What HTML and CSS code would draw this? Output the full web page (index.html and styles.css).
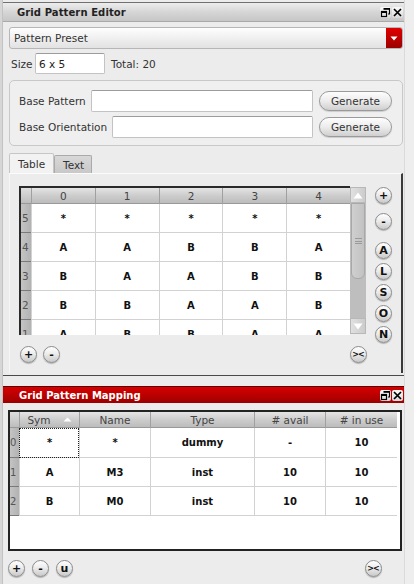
FILE: index.html
```html
<!DOCTYPE html>
<html>
<head>
<meta charset="utf-8">
<title>Grid Pattern Editor</title>
<link rel="stylesheet" href="styles.css">
</head>
<body>
<div class="screen">
  <div class="edge-left"></div>
  <div class="main">
    <section class="panel editor">
      <header class="titlebar">
        <span class="title">Grid Pattern Editor</span>
        <span class="win-icons">
          <span class="win-btn"><svg width="11" height="11" viewBox="0 0 11 11"><path d="M4 1.5h5.5v5.5H8" fill="none" stroke="#000" stroke-width="1.2"/><rect x="1.5" y="4.5" width="5" height="5" fill="none" stroke="#000" stroke-width="1.2"/><rect x="1" y="4" width="6" height="2" fill="#000"/><rect x="3.5" y="1" width="6.5" height="1.8" fill="#000"/></svg></span>
          <span class="win-btn"><svg width="11" height="11" viewBox="0 0 11 11"><path d="M2 2l7 7M9 2l-7 7" stroke="#000" stroke-width="1.7"/></svg></span>
        </span>
      </header>
      <div class="editor-body">
        <div class="combo">
          <span class="combo-text">Pattern Preset</span>
          <span class="combo-arrow"><svg width="8" height="5" viewBox="0 0 8 5"><path d="M0.5 0.5h7L4 4.5z" fill="#fff"/></svg></span>
        </div>
        <div class="size-row">
          <span class="size-label">Size</span>
          <span class="field size-field">6 x 5</span>
          <span class="total">Total: 20</span>
        </div>
        <div class="group">
          <div class="grow">
            <span class="glabel">Base Pattern</span>
            <span class="field gfield"></span>
            <span class="gen">Generate</span>
          </div>
          <div class="grow">
            <span class="glabel">Base Orientation</span>
            <span class="field gfield"></span>
            <span class="gen">Generate</span>
          </div>
        </div>
        <div class="tabs">
          <span class="tab active">Table</span>
          <span class="tab">Text</span>
        </div>
        <div class="tabpanel">
          <div class="grid-area">
            <div class="grid-wrap">
              <div class="grid">
                <div class="hcorner"></div>
                <div class="hcell">0</div><div class="hcell">1</div><div class="hcell">2</div><div class="hcell">3</div><div class="hcell">4</div>

                <div class="rhead">5</div>
                <div class="cell">*</div><div class="cell">*</div><div class="cell">*</div><div class="cell">*</div><div class="cell">*</div>

                <div class="rhead">4</div>
                <div class="cell">A</div><div class="cell">A</div><div class="cell">B</div><div class="cell">B</div><div class="cell">A</div>

                <div class="rhead">3</div>
                <div class="cell">B</div><div class="cell">A</div><div class="cell">A</div><div class="cell">B</div><div class="cell">B</div>

                <div class="rhead">2</div>
                <div class="cell">B</div><div class="cell">B</div><div class="cell">A</div><div class="cell">A</div><div class="cell">B</div>

                <div class="rhead">1</div>
                <div class="cell">A</div><div class="cell">B</div><div class="cell">B</div><div class="cell">A</div><div class="cell">A</div>
              </div>
              <div class="vscroll">
                <span class="sarrow"><svg width="10" height="7" viewBox="0 0 10 7"><path d="M5 0.5L9.5 6.5H0.5z" fill="#fff"/></svg></span>
                <span class="strack">
                  <span class="thumb"><span class="grip"></span></span>
                </span>
                <span class="sarrow down"><svg width="10" height="7" viewBox="0 0 10 7"><path d="M0.5 0.5h9L5 6.5z" fill="#fff"/></svg></span>
              </div>
            </div>
            <div class="side-btns">
              <span class="rb">+</span>
              <span class="rb gap-minus">-</span>
              <span class="rb gap-a">A</span>
              <span class="rb">L</span>
              <span class="rb">S</span>
              <span class="rb">O</span>
              <span class="rb">N</span>
            </div>
          </div>
          <div class="grid-footer">
            <span class="rb">+</span>
            <span class="rb">-</span>
            <span class="spacer"></span>
            <span class="rb small">&gt;&lt;</span>
          </div>
        </div>
      </div>
    </section>

    <section class="panel mapping">
      <header class="redbar">
        <span class="title">Grid Pattern Mapping</span>
        <span class="win-icons">
          <span class="win-btn"><svg width="11" height="11" viewBox="0 0 11 11"><path d="M4 1.5h5.5v5.5H8" fill="none" stroke="#000" stroke-width="1.2"/><rect x="1.5" y="4.5" width="5" height="5" fill="none" stroke="#000" stroke-width="1.2"/><rect x="1" y="4" width="6" height="2" fill="#000"/><rect x="3.5" y="1" width="6.5" height="1.8" fill="#000"/></svg></span>
          <span class="win-btn"><svg width="11" height="11" viewBox="0 0 11 11"><path d="M2 2l7 7M9 2l-7 7" stroke="#000" stroke-width="1.7"/></svg></span>
        </span>
      </header>
      <div class="map-body">
        <div class="map-table">
          <div class="mgrid">
            <div class="hcorner"></div>
            <div class="hcell sym">Sym <svg class="sort" width="9" height="5" viewBox="0 0 9 5"><path d="M4.5 0.5L8.5 4.5H0.5z" fill="#fff"/></svg></div>
            <div class="hcell">Name</div>
            <div class="hcell">Type</div>
            <div class="hcell"># avail</div>
            <div class="hcell"># in use</div>

            <div class="rhead">0</div>
            <div class="cell focus">*</div><div class="cell">*</div><div class="cell">dummy</div><div class="cell">-</div><div class="cell">10</div>

            <div class="rhead">1</div>
            <div class="cell">A</div><div class="cell">M3</div><div class="cell">inst</div><div class="cell">10</div><div class="cell">10</div>

            <div class="rhead">2</div>
            <div class="cell">B</div><div class="cell">M0</div><div class="cell">inst</div><div class="cell">10</div><div class="cell">10</div>
          </div>
        </div>
        <div class="map-footer">
          <span class="rb">+</span>
          <span class="rb">-</span>
          <span class="rb">u</span>
          <span class="spacer"></span>
          <span class="rb small">&gt;&lt;</span>
        </div>
      </div>
    </section>
  </div>
  <div class="edge-right"></div>
</div>
</body>
</html>
```

FILE: styles.css
```css
* { box-sizing: border-box; }

html, body { margin: 0; padding: 0; }

body {
  width: 414px;
  height: 584px;
  overflow: hidden;
  background: #ececec;
  font-family: "DejaVu Sans", "Liberation Sans", sans-serif;
  font-size: 10.5px;
  color: #333;
}

.screen { display: flex; height: 584px; }

.edge-left {
  width: 3px;
  background: #d6d6d6;
  border-right: 1px solid #c2c2c2;
}

.main { width: 401px; display: flex; flex-direction: column; }

.edge-right {
  flex: 1;
  background: #eeeeee;
  border-left: 1px solid #dadada;
}

.panel { display: flex; flex-direction: column; }

/* ---------- title bars ---------- */
.editor {
  margin-top: 2px;
  border-top: 1px solid #707070;
  border-bottom: 1px solid #4a4a4a;
}

.titlebar {
  height: 19px;
  display: flex;
  align-items: center;
  justify-content: space-between;
  padding: 0 1px 0 14px;
  background: linear-gradient(#ececec, #d6d6d6 50%, #c6c6c6);
  border-bottom: 1px solid #a9a9a9;
}

.title { font-weight: bold; font-size: 10px; color: #222; letter-spacing: 0.1px; }

.win-icons { display: flex; gap: 1px; }

.win-btn {
  width: 11px;
  height: 11px;
  display: flex;
  align-items: center;
  justify-content: center;
  background: linear-gradient(#fafafa, #d9d9d9);
  border-radius: 2px;
}

.redbar {
  height: 17px;
  display: flex;
  align-items: center;
  justify-content: space-between;
  padding: 0 1px 0 16px;
  background: linear-gradient(#d60000, #b80000 55%, #9c0000);
  border-top: 1px solid #5a0000;
}

.redbar .title { color: #fff; letter-spacing: 0; }

/* ---------- editor body ---------- */
.editor-body {
  display: flex;
  flex-direction: column;
  padding: 5px 1px 2px 6px;
}

.combo {
  height: 22px;
  display: flex;
  align-items: stretch;
  justify-content: space-between;
  border: 1px solid #b6b6b6;
  border-radius: 3px;
  background: linear-gradient(#fefefe, #f0f0f0 50%, #e2e2e2);
}

.combo-text { display: flex; align-items: center; padding-left: 4px; color: #333; }

.combo-arrow {
  width: 16px;
  display: flex;
  align-items: center;
  justify-content: center;
  background: linear-gradient(#e00000, #b80000 60%, #9a0000);
  border-radius: 0 2px 2px 0;
}

.size-row {
  height: 21px;
  margin-top: 4px;
  display: flex;
  align-items: center;
}

.size-label { width: 26px; padding-left: 2px; }

.field {
  background: #fff;
  border: 1px solid #c3c3c3;
  border-top-color: #9c9c9c;
  border-radius: 2px;
  display: flex;
  align-items: center;
  color: #222;
}

.size-field { width: 70px; height: 21px; padding-left: 3px; }

.total { margin-left: 6px; }

.group {
  margin-top: 6px;
  height: 66px;
  border: 1px solid #c8c8c8;
  border-radius: 5px;
  background: #efefef;
  padding: 9px 10px 0 9px;
  display: flex;
  flex-direction: column;
  gap: 4px;
}

.grow { height: 22px; display: flex; align-items: center; }

.glabel { margin-right: 5px; }

.gfield { flex: 1; height: 22px; }

.gen {
  width: 73px;
  height: 20px;
  margin-left: 6px;
  border: 1px solid #9a9a9a;
  border-radius: 10px;
  background: linear-gradient(#fdfdfd, #ececec 50%, #cfcfcf);
  display: flex;
  align-items: center;
  justify-content: center;
  color: #333;
  box-shadow: 0 1px 1px rgba(0,0,0,0.15);
}

.tabs {
  margin-top: 7px;
  height: 20px;
  display: flex;
  align-items: flex-end;
}

.tab {
  height: 18px;
  width: 38px;
  display: flex;
  align-items: center;
  padding-left: 8px;
  background: linear-gradient(#d8d8d8, #c8c8c8);
  border: 1px solid #aaaaaa;
  border-bottom: none;
  border-radius: 2px 2px 0 0;
}

.tab.active {
  height: 20px;
  width: 45px;
  background: #f2f2f2;
  border-color: #c6c6c6;
}

.tabpanel {
  height: 200px;
  border-top: 1px solid #fbfbfb;
  border-left: 1px solid #f6f6f6;
  border-right: 2px solid #3a3a3a;
  padding: 12px 0 0 9px;
  display: flex;
  flex-direction: column;
}

.grid-area { height: 149px; display: flex; }

.grid-wrap { width: 347px; display: flex; }

.grid {
  width: 331px;
  height: 149px;
  overflow: hidden;
  background: #fff;
  border-top: 2px solid #2a2a2a;
  border-left: 2px solid #2a2a2a;
  display: grid;
  grid-template-columns: 10px repeat(5, 1fr);
  grid-template-rows: 16px;
  grid-auto-rows: 29px;
}

.hcorner {
  background: linear-gradient(#dedede, #bdbdbd);
  border-bottom: 1px solid #999;
}

.hcell {
  background: linear-gradient(#e4e4e4, #cdcdcd 50%, #bcbcbc);
  border-left: 1px solid #a0a0a0;
  border-bottom: 1px solid #999;
  display: flex;
  align-items: center;
  justify-content: center;
  color: #444;
}

.rhead {
  background: linear-gradient(90deg, #c4c4c4, #b2b2b2);
  border-bottom: 1px solid #7a7a7a;
  display: flex;
  align-items: center;
  padding-left: 1px;
  color: #555;
  font-size: 10.5px;
}

.cell {
  border-left: 1px solid #d2d2d2;
  border-bottom: 1px solid #d2d2d2;
  display: flex;
  align-items: center;
  justify-content: center;
  font-weight: bold;
  font-size: 10px;
  color: #111;
}

.vscroll {
  width: 16px;
  height: 147px;
  margin-top: 1px;
  display: flex;
  flex-direction: column;
  background: #c5c5c5;
}

.sarrow {
  height: 16px;
  display: flex;
  align-items: center;
  justify-content: center;
  background: linear-gradient(90deg, #e0e0e0, #cccccc);
  border: 1px solid #b8b8b8;
}

.strack {
  flex: 1;
  display: flex;
  flex-direction: column;
  background: #bebebe;
  padding: 0 1px;
}

.thumb {
  height: 76px;
  border: 1px solid #a8a8a8;
  border-radius: 0 0 6px 6px;
  background: linear-gradient(90deg, #cfcfcf, #c2c2c2);
  display: flex;
  align-items: center;
  justify-content: center;
}

.grip {
  width: 7px;
  height: 6px;
  border-top: 1px solid #9a9a9a;
  border-bottom: 1px solid #9a9a9a;
  background: linear-gradient(transparent 2px, #9a9a9a 2px, #9a9a9a 3px, transparent 3px);
}

.side-btns {
  margin-left: 9px;
  width: 17px;
  display: flex;
  flex-direction: column;
  gap: 4px;
  padding-top: 1px;
}

.side-btns .gap-minus { margin-top: 5px; }
.side-btns .gap-a { margin-top: 8px; }

.rb {
  width: 17px;
  height: 17px;
  flex: none;
  border-radius: 50%;
  border: 1px solid #8c8c8c;
  background: linear-gradient(#ffffff, #ececec 45%, #c9c9c9);
  box-shadow: 0 1px 1px rgba(0,0,0,0.25);
  display: flex;
  align-items: center;
  justify-content: center;
  font-weight: bold;
  font-size: 11px;
  color: #111;
}

.rb.small { font-size: 8px; letter-spacing: -1px; padding-right: 1px; }

.grid-footer {
  margin-top: 10px;
  height: 18px;
  width: 348px;
  display: flex;
  align-items: center;
  gap: 6px;
  padding-left: 1px;
}

.spacer { flex: 1; }

/* ---------- mapping ---------- */
.mapping { margin-top: 10px; }

.map-body {
  display: flex;
  flex-direction: column;
  padding: 7px 2px 0 5px;
}

.map-table {
  width: 394px;
  height: 141px;
  border: 2px solid #222;
  background: #fff;
}

.mgrid {
  width: 387px;
  display: grid;
  grid-template-columns: 9px 60px 71px 104px 71px 72px;
  grid-template-rows: 16px 30px 29px 29px;
}

.mgrid .hcell:first-of-type { border-left: none; }

.mgrid .cell { font-size: 10px; }

.mgrid .rhead { padding-left: 0; font-size: 10px; }

.sym { gap: 8px; }
.sort { margin-left: 4px; }

.cell.focus { outline: 1px dotted #222; outline-offset: -1px; }

.map-footer {
  margin-top: 8px;
  height: 19px;
  display: flex;
  align-items: center;
  gap: 7px;
  padding: 0 20px 0 0;
}
```
